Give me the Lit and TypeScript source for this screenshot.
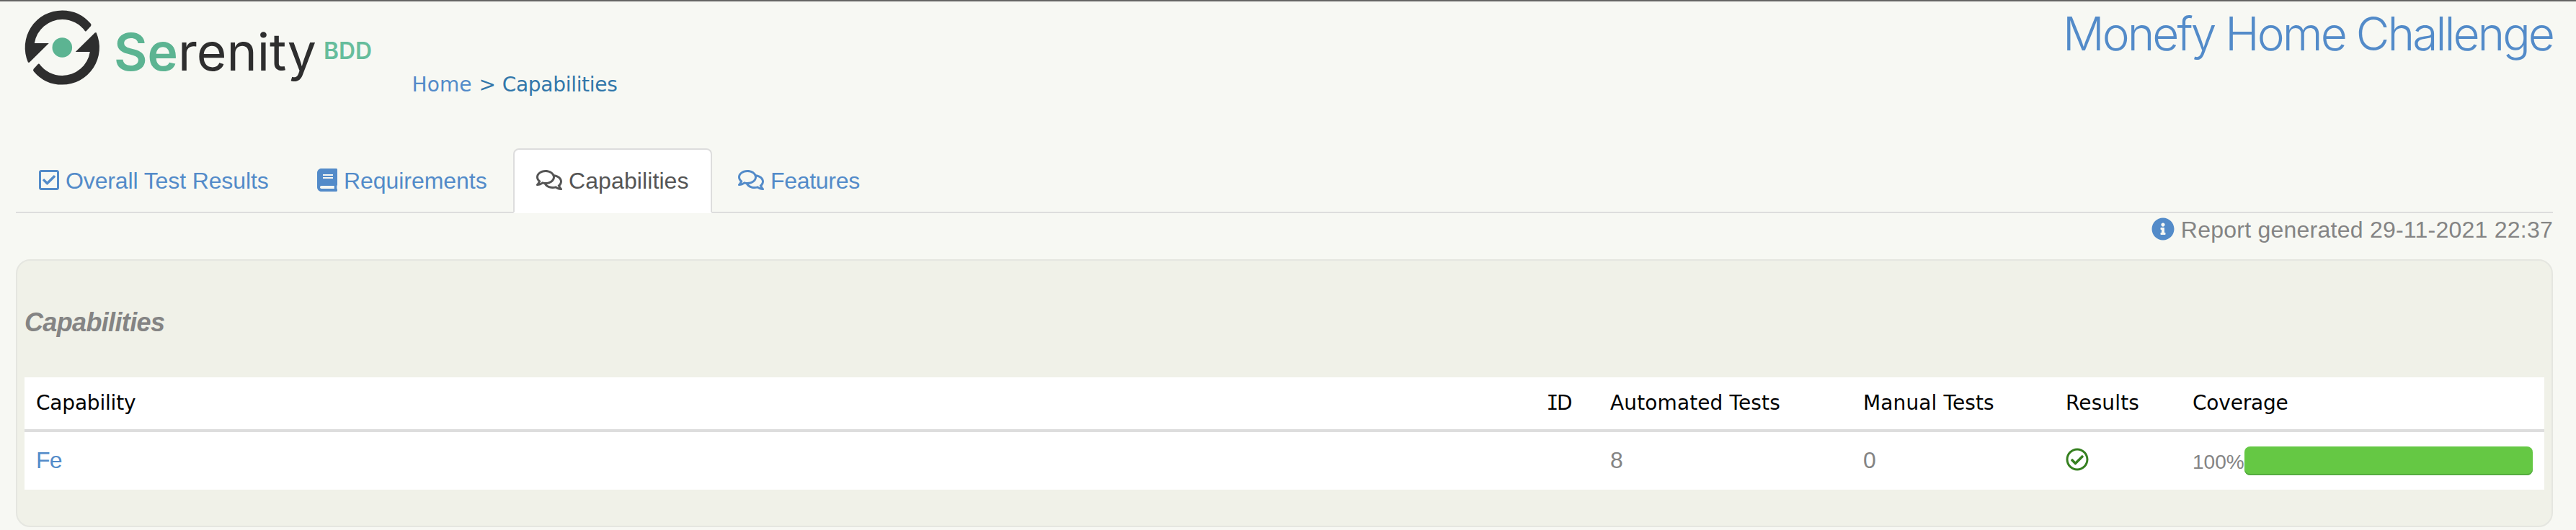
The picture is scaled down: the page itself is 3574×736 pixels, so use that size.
import { LitElement, html, css } from "lit";
import { customElement, property } from "lit/decorators.js";

const ICONS: Record<string, { w: number; d: string }> = {
  checkSquare: {
    w: 448,
    d: "M400 32H48C21.49 32 0 53.49 0 80v352c0 26.51 21.49 48 48 48h352c26.51 0 48-21.49 48-48V80c0-26.51-21.49-48-48-48zm0 400H48V80h352v352zm-35.864-241.724L191.547 361.48c-4.705 4.667-12.303 4.637-16.97-.068l-90.781-91.516c-4.667-4.705-4.637-12.303.069-16.971l22.719-22.536c4.705-4.667 12.303-4.637 16.97.069l59.792 60.277 141.352-140.216c4.705-4.667 12.303-4.637 16.97.068l22.536 22.718c4.667 4.706 4.637 12.304-.068 16.971z",
  },
  book: {
    w: 448,
    d: "M448 360V24c0-13.3-10.7-24-24-24H96C43 0 0 43 0 96v320c0 53 43 96 96 96h328c13.3 0 24-10.7 24-24v-16c0-7.5-3.5-14.3-8.9-18.7-4.2-15.4-4.2-59.3 0-74.7 5.4-4.3 8.9-11.1 8.9-18.6zM128 134c0-3.3 2.7-6 6-6h212c3.3 0 6 2.7 6 6v20c0 3.3-2.7 6-6 6H134c-3.3 0-6-2.7-6-6v-20zm0 64c0-3.3 2.7-6 6-6h212c3.3 0 6 2.7 6 6v20c0 3.3-2.7 6-6 6H134c-3.3 0-6-2.7-6-6v-20zm253.4 250H96c-17.7 0-32-14.3-32-32 0-17.6 14.4-32 32-32h285.4c-1.9 17.1-1.9 46.9 0 64z",
  },
  comments: {
    w: 576,
    d: "M532 386.2c27.5-27.1 44-61.1 44-98.2 0-80-76.5-146.1-176.2-157.9C368.3 72.5 294.3 32 208 32 93.1 32 0 103.6 0 192c0 37 16.5 71 44 98.2-15.3 30.7-37.3 54.5-37.7 54.9-6.3 6.7-8.1 16.5-4.4 25 3.6 8.5 12 14 21.2 14 53.5 0 96.7-20.2 125.2-38.8 9.2 2.1 18.7 3.7 28.4 4.9C208.1 407.6 281.8 448 368 448c20.8 0 40.8-2.4 59.8-6.8C456.3 459.7 499.4 480 553 480c9.2 0 17.5-5.5 21.2-14 3.6-8.5 1.9-18.3-4.4-25-.4-.3-22.5-24.1-37.8-54.8zm-392.8-92.3L122.1 305c-14.1 9.1-28.5 16.3-43.1 21.4 2.7-4.7 5.4-9.7 8-14.8l15.5-31.1L77.7 256C64.2 242.6 48 220.7 48 192c0-60.7 73.3-112 160-112s160 51.3 160 112-73.3 112-160 112c-16.5 0-33-1.9-49-5.6l-19.8-4.5zM498.3 352l-24.7 24.4 15.5 31.1c2.6 5.1 5.3 10.1 8 14.8-14.6-5.1-29-12.3-43.1-21.4l-17.1-11.1-19.9 4.6c-16 3.7-32.5 5.6-49 5.6-54 0-102.2-20.1-131.3-49.7C338 339.5 416 272.9 416 192c0-3.4-.4-6.7-.7-10C479.7 196.5 528 238.8 528 288c0 28.7-16.2 50.6-29.7 64z",
  },
  info: {
    w: 512,
    d: "M256 8C119.043 8 8 119.083 8 256c0 136.997 111.043 248 248 248s248-111.003 248-248C504 119.083 392.957 8 256 8zm0 110c23.196 0 42 18.804 42 42s-18.804 42-42 42-42-18.804-42-42 18.804-42 42-42zm56 254c0 6.627-5.373 12-12 12h-88c-6.627 0-12-5.373-12-12v-24c0-6.627 5.373-12 12-12h12v-64h-12c-6.627 0-12-5.373-12-12v-24c0-6.627 5.373-12 12-12h64c6.627 0 12 5.373 12 12v100h12c6.627 0 12 5.373 12 12v24z",
  },
  checkCircle: {
    w: 512,
    d: "M256 8C119.033 8 8 119.033 8 256s111.033 248 248 248 248-111.033 248-248S392.967 8 256 8zm0 48c110.532 0 200 89.451 200 200 0 110.532-89.451 200-200 200-110.532 0-200-89.451-200-200 0-110.532 89.451-200 200-200m140.204 130.267l-22.536-22.718c-4.667-4.705-12.265-4.736-16.97-.068L215.346 303.697l-59.792-60.277c-4.667-4.705-12.265-4.736-16.97-.069l-22.719 22.536c-4.705 4.667-4.736 12.265-.068 16.971l90.781 91.516c4.667 4.705 12.265 4.736 16.97.068l172.589-171.204c4.704-4.668 4.734-12.266.066-16.971z",
  },
};

@customElement("fa-icon")
export class FaIcon extends LitElement {
  @property() name = "info";

  static styles = css`
    :host { display: block; flex: none; height: 32px; }
    svg { display: block; height: 32px; fill: currentColor; }
  `;

  render() {
    const icon = ICONS[this.name];
    return html`<svg width=${icon.w / 16} height="32" viewBox="0 0 ${icon.w} 512">
      <path d=${icon.d}></path>
    </svg>`;
  }
}

// One hooked arc of the emblem; the second is the same shape turned by half a circle.
const ARC =
  "M40.7 86.7L39 86.7A51.6 51.6 0 0 1 86.3 14.4A51.6 51.6 0 0 1 125.6 32.6Q127.4 34.6 126 36.2L119.6 43.2Q118.8 44 118 43.2A39 39 0 0 0 86.3 27A39 39 0 0 0 47.8 60H67.8Z";

@customElement("serenity-logo")
export class SerenityLogo extends LitElement {
  static styles = css`
    :host { display: block; flex: none; }
    svg { display: block; }
    text { font-family: Inter, "Liberation Sans", sans-serif; }
    .dark { fill: #2e2e2e; }
    .green { fill: #5cb492; }
    .word { font-size: 72px; }
    .bold { font-weight: 600; }
    .sup { font-size: 32px; font-weight: 600; fill: #66bd9c; }
  `;

  render() {
    return html`<svg width="522" height="130" viewBox="0 2 522 130">
      <path class="dark" d=${ARC}></path>
      <path class="dark" d=${ARC} transform="rotate(180 86.3 66)"></path>
      <circle class="green" cx="86.3" cy="66" r="13.8"></circle>
      <text class="word bold green" x="158" y="97.5" textLength="89" lengthAdjust="spacingAndGlyphs">Se</text>
      <text class="word dark" x="247" y="97.5" textLength="192" lengthAdjust="spacingAndGlyphs">renity</text>
      <text class="sup" x="449" y="82" textLength="67" lengthAdjust="spacingAndGlyphs">BDD</text>
    </svg>`;
  }
}

const TABS = [
  { icon: "checkSquare", label: "Overall Test Results", active: false },
  { icon: "book", label: "Requirements", active: false },
  { icon: "comments", label: "Capabilities", active: true },
  { icon: "comments", label: "Features", active: false },
];

const ROWS = [{ name: "Fe", id: "", automated: 8, manual: 0, coverage: 100 }];

@customElement("app-root")
export class AppRoot extends LitElement {
  static styles = css`
    :host {
      display: block;
      box-sizing: border-box;
      width: 100%;
      height: 736px;
      overflow: hidden;
      background: #f7f8f3;
      border-top: 2px solid #646463;
      font: 32px/46px "Liberation Sans", Arial, sans-serif;
      color: #848484;
    }
    * { box-sizing: border-box; }
    .link { color: #538bc9; }
    header { display: flex; height: 204px; padding-right: 32px; }
    .crumbs {
      display: flex;
      margin: 96px 0 0 49.5px;
      height: 40px;
      font: 28px/40px "DejaVu Sans", sans-serif;
      letter-spacing: -0.3px;
      color: #3277aa;
      white-space: nowrap;
    }
    .crumbs .link { letter-spacing: 0.1px; }
    .separator { margin: 0 9px 0 10px; }
    .title {
      margin: 6px 0 0 auto;
      font: 400 64px/77px Inter, "Liberation Sans", sans-serif;
      font-weight: 330;
      letter-spacing: -2.95px;
      white-space: nowrap;
    }
    nav {
      display: flex;
      gap: 4px;
      height: 90px;
      margin: 0 32px 0 22px;
      box-shadow: inset 0 -2px #ddd;
    }
    .tab {
      display: flex;
      gap: 9px;
      height: 90px;
      padding: 20px 30px;
      border: 2px solid transparent;
      color: #538bc9;
      letter-spacing: -0.12px;
      white-space: nowrap;
    }
    .tab:nth-child(1) { width: 382px; }
    .tab:nth-child(2) { width: 300px; letter-spacing: -0.05px; }
    .tab:nth-child(3) { width: 276px; letter-spacing: 0.1px; }
    .tab:nth-child(4) { letter-spacing: -0.3px; }
    .tab fa-icon { margin-top: 6px; }
    .tab.active {
      color: #555;
      background: #fff;
      border-color: #ddd;
      border-bottom-color: #fff;
      border-radius: 8px 8px 0 0;
    }
    .generated {
      display: flex;
      justify-content: flex-end;
      gap: 9px;
      height: 46px;
      margin-right: 32px;
      letter-spacing: 0.24px;
      white-space: nowrap;
    }
    .generated fa-icon { margin-top: 6px; color: #538bc9; }
    .panel {
      height: 372px;
      margin: 18px 32px 0 22px;
      padding: 66px 10px 0;
      border: 2px solid #e5e6e0;
      border-radius: 20px;
      background: #f0f1e8;
    }
    h3 {
      margin: 0 0 56px;
      font-size: 36px;
      line-height: 40px;
      font-style: italic;
      font-weight: 700;
      letter-spacing: -0.65px;
    }
    .table { background: #fff; }
    .row {
      display: grid;
      grid-template-columns: 2097px 87px 351px 281px 176px 1fr;
      height: 80px;
      padding-top: 16px;
    }
    .row > div { padding: 0 16px; white-space: nowrap; }
    .row > .name { letter-spacing: -0.8px; }
    .head {
      height: 76px;
      border-bottom: 4px solid #ddd;
      font: 28px/40px "DejaVu Sans", sans-serif;
      letter-spacing: 0.12px;
      color: #000;
    }
    .head > div:first-child, .head > div:last-child { letter-spacing: -0.2px; }
    .slab { font-family: "DejaVu Sans Mono", monospace; margin: 0 -2.4px 0 -1.5px; }
    .pass { color: #368020; }
    .pass fa-icon { margin-top: 6px; }
    .row > .coverage { display: flex; padding-top: 4px; }
    .percent { flex: none; width: 72px; font-size: 28px; line-height: 44px; }
    .track { width: 400px; height: 40px; }
    .bar {
      height: 40px;
      border-radius: 8px;
      background: #65c844;
      box-shadow: inset 0 -2px #55ab40;
    }
  `;

  render() {
    return html`
      <header>
        <serenity-logo></serenity-logo>
        <div class="crumbs">
          <span class="link">Home</span><span class="separator">&gt;</span><span>Capabilities</span>
        </div>
        <div class="title link">Monefy Home Challenge</div>
      </header>
      <nav>
        ${TABS.map(
          (t) => html`<div class="tab ${t.active ? "active" : ""}">
            <fa-icon name=${t.icon}></fa-icon><span>${t.label}</span>
          </div>`
        )}
      </nav>
      <div class="generated">
        <fa-icon name="info"></fa-icon><span>Report generated 29-11-2021 22:37</span>
      </div>
      <section class="panel">
        <h3>Capabilities</h3>
        <div class="table">
          <div class="row head">
            <div>Capability</div><div><span class="slab">I</span>D</div><div>Automated Tests</div>
            <div>Manual Tests</div><div>Results</div><div>Coverage</div>
          </div>
          ${ROWS.map(
            (r) => html`<div class="row">
              <div class="name link">${r.name}</div><div>${r.id}</div>
              <div>${r.automated}</div><div>${r.manual}</div>
              <div class="pass"><fa-icon name="checkCircle"></fa-icon></div>
              <div class="coverage">
                <span class="percent">${r.coverage}%</span>
                <div class="track"><div class="bar" style="width:${r.coverage}%"></div></div>
              </div>
            </div>`
          )}
        </div>
      </section>
    `;
  }
}
